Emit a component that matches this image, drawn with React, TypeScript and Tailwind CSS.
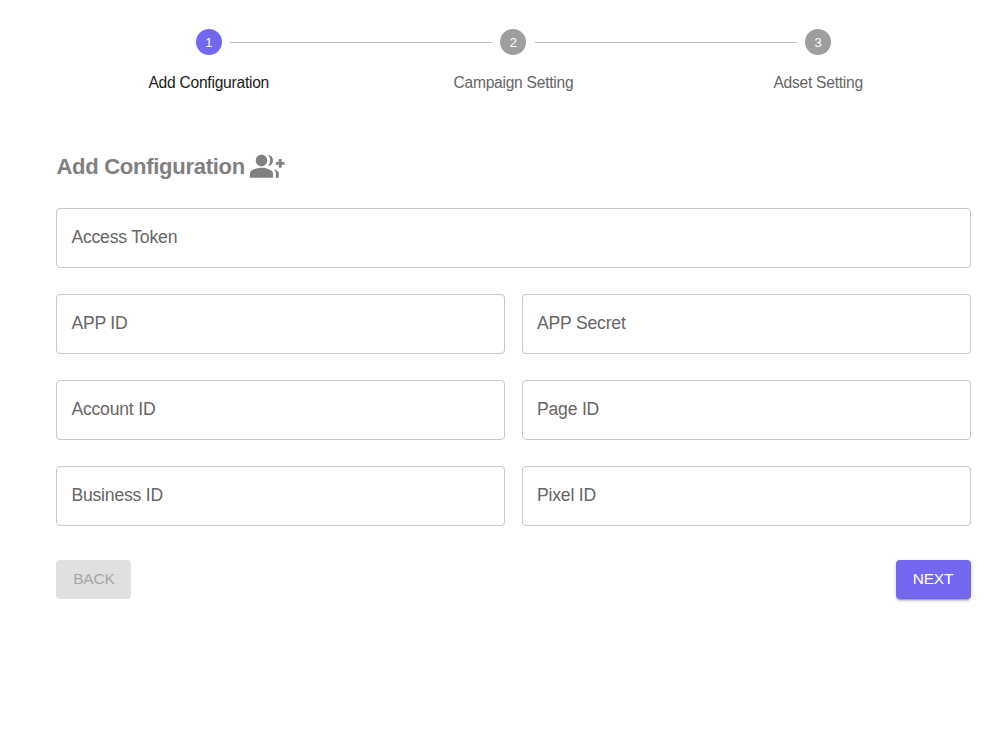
import { MdGroupAdd } from "react-icons/md";

const steps = ["Add Configuration", "Campaign Setting", "Adset Setting"];

const fieldRows = [
	["Access Token"],
	["APP ID", "APP Secret"],
	["Account ID", "Page ID"],
	["Business ID", "Pixel ID"],
];

function Stepper({ active }: { active: number }) {
	return (
		<ol className="flex">
			{steps.map((label, i) => (
				<li key={label} className="flex flex-1 flex-col items-center">
					<div className="flex w-full items-center">
						<div className={`h-px flex-1 ${i > 0 ? "bg-[#bdbdbd]" : ""}`} />
						<div
							className={`mx-[8.5px] flex size-[26px] items-center justify-center rounded-full pt-px text-[13px] text-white ${
								i === active ? "bg-[#7367f0]" : "bg-[#9e9e9e]"
							}`}
						>
							{i + 1}
						</div>
						<div
							className={`h-px flex-1 ${i < steps.length - 1 ? "bg-[#bdbdbd]" : ""}`}
						/>
					</div>
					<span
						className={`mt-[17px] text-[15.6px] leading-[21px] tracking-[-0.25px] ${
							i === active ? "text-[#212121]" : "text-[#666666]"
						}`}
					>
						{label}
					</span>
				</li>
			))}
		</ol>
	);
}

function Field({ label }: { label: string }) {
	return (
		<input
			placeholder={label}
			aria-label={label}
			className="h-[60px] min-w-0 flex-1 rounded-[4px] border border-[#c8c8c8] px-[14px] pb-px text-[17.6px] tracking-[-0.2px] outline-none placeholder:text-[#666666]"
		/>
	);
}

export default function App() {
	return (
		<main className="min-h-screen bg-white pt-[29px] pr-[29.5px] pl-[56.4px] font-['Liberation_Sans',Arial,sans-serif]">
			<Stepper active={0} />
			<h2 className="mt-[56px] flex h-[34px] items-center gap-[5.5px] text-[22px] font-bold tracking-[-0.27px] text-[#808080]">
				Add Configuration
				<MdGroupAdd className="size-[34.5px]" />
			</h2>
			<form className="mt-[25px]">
				<div className="flex flex-col gap-[26px]">
					{fieldRows.map((row) => (
						<div key={row[0]} className="flex gap-[17px]">
							{row.map((label) => (
								<Field key={label} label={label} />
							))}
						</div>
					))}
				</div>
				<div className="mt-[34px] flex justify-between">
					<button
						type="button"
						disabled
						className="h-[39px] w-[75px] rounded-[4px] bg-[#e0e0e0] pb-[2px] text-[15.5px] tracking-[-0.25px] text-[#a6a6a6]"
					>
						BACK
					</button>
					<button
						type="button"
						className="h-[39px] w-[75px] rounded-[4px] bg-[#7367f0] pb-[2px] text-[15.5px] tracking-[-0.25px] text-white shadow-[0_3px_1px_-2px_rgba(0,0,0,0.2),0_2px_2px_rgba(0,0,0,0.14),0_1px_5px_rgba(0,0,0,0.12)]"
					>
						NEXT
					</button>
				</div>
			</form>
		</main>
	);
}
